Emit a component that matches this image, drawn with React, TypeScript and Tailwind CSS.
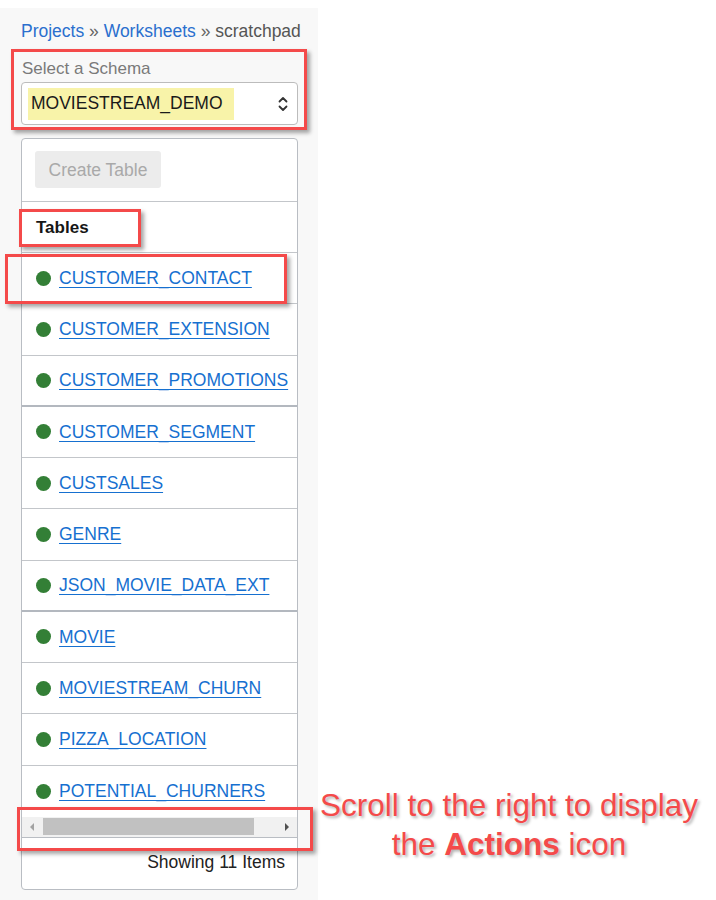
import React from 'react';

const tables = [
  { name: 'CUSTOMER_CONTACT', thick: false },
  { name: 'CUSTOMER_EXTENSION', thick: false },
  { name: 'CUSTOMER_PROMOTIONS', thick: true },
  { name: 'CUSTOMER_SEGMENT', thick: false },
  { name: 'CUSTSALES', thick: false },
  { name: 'GENRE', thick: false },
  { name: 'JSON_MOVIE_DATA_EXT', thick: true },
  { name: 'MOVIE', thick: false },
  { name: 'MOVIESTREAM_CHURN', thick: false },
  { name: 'PIZZA_LOCATION', thick: false },
  { name: 'POTENTIAL_CHURNERS', thick: false },
];

const callout =
  'absolute border-[3px] border-[#f44a4a] shadow-[3px_3px_4px_rgba(0,0,0,0.35)] pointer-events-none';

const App = () => {
  return (
    <div className="relative w-[716px] h-[900px] bg-white flex font-['Liberation_Sans',Arial,sans-serif] overflow-hidden">
      {/* Left panel */}
      <div className="w-[318px] mt-[8px] bg-[#f8f8f8] pl-[21px] flex flex-col">
        {/* Breadcrumb */}
        <div className="pt-[11px] h-[50px] text-[17.5px] leading-[24px] text-[#555] whitespace-nowrap">
          <span className="text-[#2a6fce]">Projects</span>
          <span className="text-[#666]"> » </span>
          <span className="text-[#2a6fce]">Worksheets</span>
          <span className="text-[#666]"> » </span>
          <span>scratchpad</span>
        </div>

        {/* Schema select */}
        <div className="text-[17px] leading-[22px] text-[#7a7a7a] pl-px">Select a Schema</div>
        <div className="mt-[2px] w-[277px] h-[43px] bg-white border border-[#bcbcbc] rounded-[4px] flex items-center pl-[6px] pr-[8px]">
          <div className="h-[32px] w-[206px] bg-[#f8f3a9] pl-[3px] flex items-center text-[17.5px] text-[#1a1a1a]">
            MOVIESTREAM_DEMO
          </div>
          <div className="ml-auto">
            <svg width="12" height="18" viewBox="0 0 12 18" fill="none" stroke="#333" strokeWidth="1.8" strokeLinecap="round" strokeLinejoin="round">
              <path d="M2.5 6.5 L6 3 L9.5 6.5" />
              <path d="M2.5 11.5 L6 15 L9.5 11.5" />
            </svg>
          </div>
        </div>

        {/* Table list card */}
        <div className="mt-[13px] w-[277px] h-[752px] bg-white border border-[#b9bdc3] rounded-[4px] flex flex-col overflow-hidden">
          <div className="px-[13px] pt-[12px] pb-[13px] border-b border-[#c3c6ca]">
            <div className="w-[126px] h-[37px] rounded-[3px] bg-[#ececec] text-[#a9a9a9] text-[17.5px] pt-px flex items-center justify-center">
              Create Table
            </div>
          </div>
          <div className="h-[51px] border-b border-[#c3c6ca] flex items-center pl-[14px] pt-[2px] text-[17px] font-bold text-[#161616]">
            Tables
          </div>
          {tables.map((t, i) => (
            <div
              key={t.name}
              className={`h-[51.27px] shrink-0 flex items-center pl-[14px] whitespace-nowrap ${
                i === tables.length - 1
                  ? ''
                  : t.thick
                  ? 'border-b-2 border-[#b3b8bf]'
                  : 'border-b border-[#c3c6ca]'
              }`}
            >
              <span className="w-[15px] h-[15px] rounded-full bg-[#337f36] shrink-0" />
              <span className="ml-[8px] text-[17.5px] text-[#1670d0] underline underline-offset-[3px] decoration-1">
                {t.name}
              </span>
            </div>
          ))}

          {/* Horizontal scrollbar */}
          <div className="h-[21px] shrink-0 bg-[#f1f1f1] border-b border-[#b9bdc3] flex items-center px-[6px]">
            <svg width="8" height="10" viewBox="0 0 8 10">
              <path d="M6 1 L2 5 L6 9 Z" fill="#a3a3a3" />
            </svg>
            <div className="ml-[7px] w-[211px] h-[17px] bg-[#c1c1c1]" />
            <svg className="ml-auto" width="8" height="10" viewBox="0 0 8 10">
              <path d="M2 1 L6 5 L2 9 Z" fill="#505050" />
            </svg>
          </div>

          <div className="flex-1 flex items-start justify-end pr-[12px] pt-[13px] text-[17.5px] leading-[22px] text-[#222]">
            Showing 11 Items
          </div>
        </div>
      </div>

      {/* Annotation */}
      <div className="flex-1 pt-[786px] pr-[16px] text-center text-[31.5px] leading-[39px] text-[#f44a4a] [text-shadow:2px_2px_3px_rgba(0,0,0,0.3)] whitespace-nowrap">
        <div>Scroll to the right to display</div>
        <div>
          the <span className="font-bold">Actions</span> icon
        </div>
      </div>

      {/* Callout boxes */}
      <div className={`${callout} left-[11px] top-[49px] w-[296px] h-[81px]`} />
      <div className={`${callout} left-[19px] top-[209px] w-[122px] h-[38px]`} />
      <div className={`${callout} left-[5px] top-[254px] w-[282px] h-[50px]`} />
      <div className={`${callout} left-[17px] top-[807px] w-[296px] h-[44px]`} />
    </div>
  );
};

export default App;
